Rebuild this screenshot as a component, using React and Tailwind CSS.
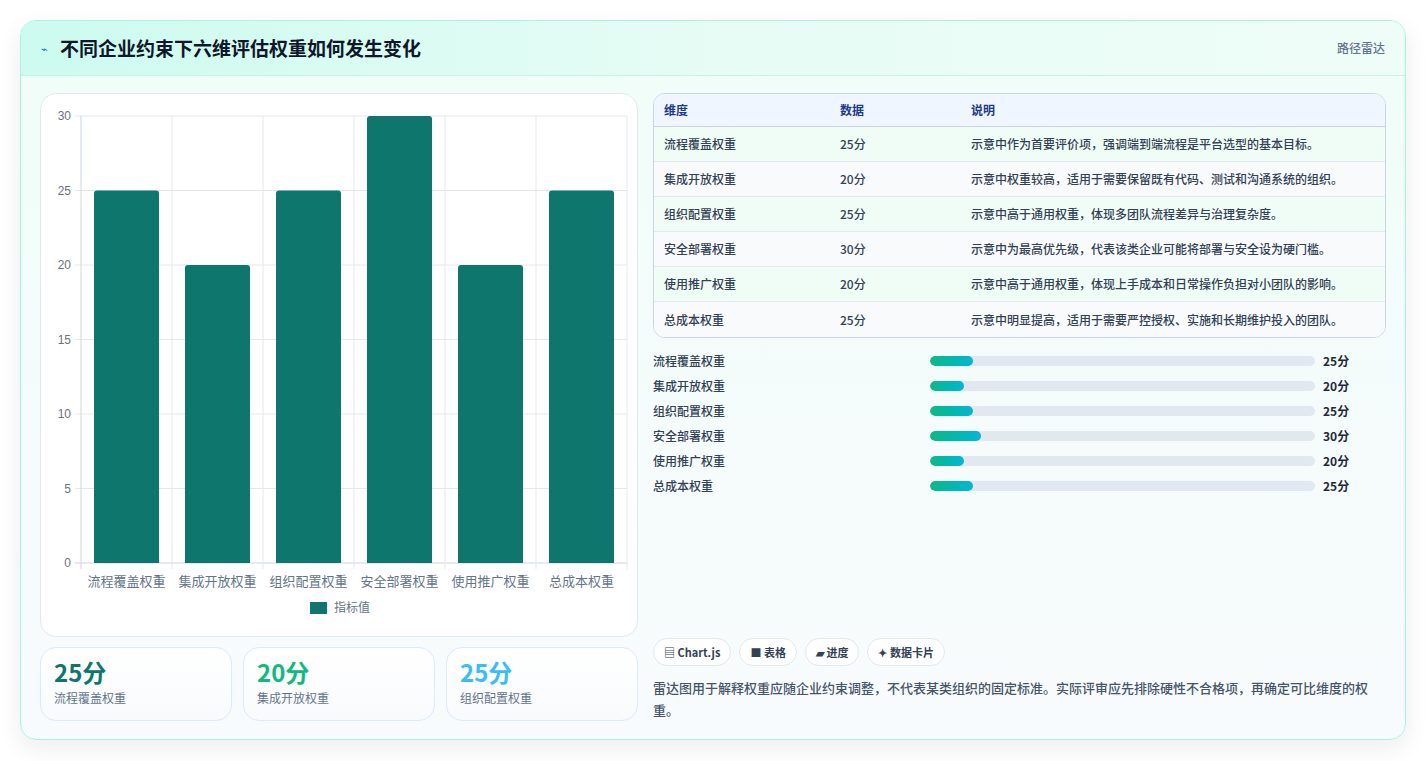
import React from "react";

const dims = [
  ["流程覆盖权重", 25, "示意中作为首要评价项，强调端到端流程是平台选型的基本目标。"],
  ["集成开放权重", 20, "示意中权重较高，适用于需要保留既有代码、测试和沟通系统的组织。"],
  ["组织配置权重", 25, "示意中高于通用权重，体现多团队流程差异与治理复杂度。"],
  ["安全部署权重", 30, "示意中为最高优先级，代表该类企业可能将部署与安全设为硬门槛。"],
  ["使用推广权重", 20, "示意中高于通用权重，体现上手成本和日常操作负担对小团队的影响。"],
  ["总成本权重", 25, "示意中明显提高，适用于需要严控授权、实施和长期维护投入的团队。"],
];

function Chart() {
  const x0 = 40, y0 = 22, w = 546, h = 447;
  const cell = w / 6;
  const ys = [0, 5, 10, 15, 20, 25, 30];
  return (
    <svg width="596" height="543" className="block" style={{ fontFamily: "'Noto Sans CJK SC', sans-serif" }}>
      {ys.map((v) => {
        const y = y0 + h - (v / 30) * h;
        return (
          <g key={v}>
            <line x1={x0 - 6} x2={x0 + w} y1={y} y2={y} stroke={v === 0 ? "#cbd5e1" : "#e5e7eb"} />
            <text x={x0 - 10} y={y + 4} textAnchor="end" fontSize="12" fill="#6b7280" fontFamily="'Liberation Sans', sans-serif">{v}</text>
          </g>
        );
      })}
      {Array.from({ length: 7 }).map((_, i) => (
        <line key={i} x1={x0 + i * cell} x2={x0 + i * cell} y1={y0} y2={y0 + h + 6} stroke={i === 0 ? "#cbd5e1" : "#e5e7eb"} />
      ))}
      {dims.map(([n, v], i) => {
        const bh = (v / 30) * h;
        return (
          <g key={n}>
            <path d={`M${x0 + i * cell + 13} ${y0 + h} V${y0 + h - bh + 3} q0 -3 3 -3 H${x0 + i * cell + 13 + 62} q3 0 3 3 V${y0 + h} Z`} fill="#0f766e" />
            <text x={x0 + i * cell + cell / 2} y={y0 + h + 23} textAnchor="middle" fontSize="13" fill="#64748b">{n}</text>
          </g>
        );
      })}
      <rect x="269" y="508" width="17" height="12" fill="#0f766e" />
      <text x="293" y="518" fontSize="12" fill="#64748b">指标值</text>
    </svg>
  );
}

export default function App() {
  return (
    <div className="w-[1426px] h-[761px] bg-white p-5 pb-[21px]" style={{ fontFamily: "'Noto Sans CJK SC', 'Noto Sans', sans-serif" }}>
      <div className="h-full rounded-2xl border border-[#a7f3e4] overflow-hidden shadow-[0_8px_24px_rgba(15,23,42,0.08)] bg-gradient-to-b from-[#f0fdf8] to-[#f8fbfd] flex flex-col">
        <div className="h-[55px] shrink-0 flex items-center justify-between px-5 bg-gradient-to-r from-[#ccfbef] via-[#e6fcf5] to-[#effdf8] border-b border-[#c9f3e6]">
          <div className="flex items-center gap-3">
            <span className="text-[#2563eb] text-[11px]">⌁</span>
            <h1 className="text-[19px] font-bold text-[#0f172a]">不同企业约束下六维评估权重如何发生变化</h1>
          </div>
          <span className="text-[12px] text-[#64748b] font-medium">路径雷达</span>
        </div>
        <div className="flex-1 flex gap-[15px] px-[19px] pt-[17px] pb-[18px]">
          <div className="w-[598px] flex flex-col gap-[10px]">
            <div className="h-[544px] bg-white rounded-2xl border border-[#e2e8f0]"><Chart /></div>
            <div className="grid grid-cols-3 gap-[11px]">
              {[["25分", "#0f766e", "流程覆盖权重"], ["20分", "#10b981", "集成开放权重"], ["25分", "#38bdf8", "组织配置权重"]].map(([v, c, l]) => (
                <div key={l} className="h-[74px] rounded-2xl border border-[#dbeafe] bg-gradient-to-b from-white to-[#f8fafc] px-[13px] pt-[9px]">
                  <div className="text-[24px] font-bold leading-[30px]" style={{ color: c }}>{v}</div>
                  <div className="text-[12px] text-[#64748b] mt-[2px]">{l}</div>
                </div>
              ))}
            </div>
          </div>
          <div className="flex-1 flex flex-col">
            <div className="rounded-xl border border-[#cbd5e1] overflow-hidden bg-white text-[12px]">
              <div className="flex h-[33px] items-center bg-[#eff6ff] border-b border-[#cbd5e1] text-[#1e3a8a] font-bold px-[10px]">
                <div className="w-[176px]">维度</div><div className="w-[131px]">数据</div><div>说明</div>
              </div>
              {dims.map(([n, v, d], i) => (
                <div key={n} className={`flex h-[35px] items-center px-[10px] font-medium text-[#334155] ${i < 5 ? "border-b border-[#e2e8f0]" : ""} ${i % 2 === 0 ? "bg-[#f0fdf6]" : "bg-[#f8fafc]"}`}>
                  <div className="w-[176px]">{n}</div><div className="w-[131px]">{v}分</div><div>{d}</div>
                </div>
              ))}
            </div>
            <div className="mt-[10px] flex flex-col">
              {dims.map(([n, v]) => (
                <div key={n} className="h-[25px] flex items-center text-[12px] font-medium text-[#334155]">
                  <div className="w-[277px]">{n}</div>
                  <div className="w-[385px] h-[10px] rounded-full bg-[#e2e8f0] overflow-hidden">
                    <div className="h-full rounded-full bg-gradient-to-r from-[#10b981] to-[#06b6d4]" style={{ width: `${(v / 30) * 13.3}%` }} />
                  </div>
                  <div className="ml-2 font-bold text-[#1e293b]">{v}分</div>
                </div>
              ))}
            </div>
            <div className="flex-1" />
            <div className="flex gap-2 text-[11px] font-bold text-[#334155]">
              {["▤ Chart.js", "■ 表格", "▰ 进度", "✦ 数据卡片"].map((t) => (
                <span key={t} className="h-[28px] px-[10px] flex items-center rounded-full border border-[#e2e8f0] bg-white">{t}</span>
              ))}
            </div>
            <p className="mt-[11px] text-[13px] leading-[22px] text-[#475569] font-medium">雷达图用于解释权重应随企业约束调整，不代表某类组织的固定标准。实际评审应先排除硬性不合格项，再确定可比维度的权重。</p>
          </div>
        </div>
      </div>
    </div>
  );
}
